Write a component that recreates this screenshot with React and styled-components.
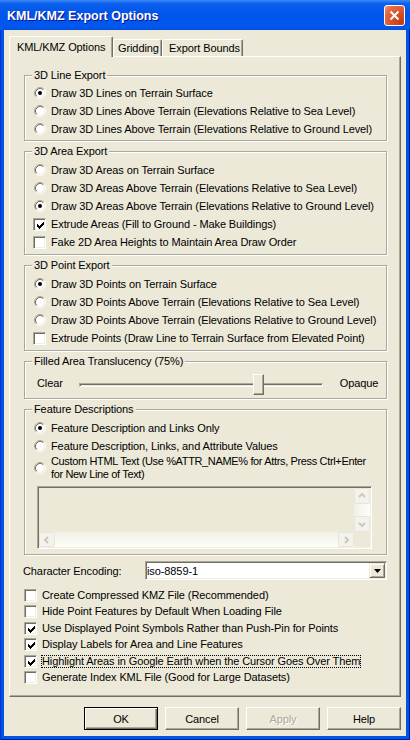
import styled, { createGlobalStyle } from "styled-components";

const GlobalStyle = createGlobalStyle`
  html, body { margin: 0; padding: 0; }
  body {
    font-family: "Liberation Sans", Arial, sans-serif;
    font-size: 11px;
    letter-spacing: -0.1px;
    color: #000;
    background: #0055e5;
  }
  * { box-sizing: border-box; }
`;

const Window = styled.div`
  width: 410px;
  height: 740px;
  display: flex;
  flex-direction: column;
  background: #0055e5;
  box-shadow: inset 1px 0 #0831d9, inset -1px 0 #001ea0, inset 0 -1px #001ea0;
`;

const TitleBar = styled.div`
  height: 30px;
  flex: none;
  display: flex;
  align-items: center;
  justify-content: space-between;
  padding: 1px 5px 0 7px;
  background: linear-gradient(180deg, #3d8af7 0%, #0a5fed 12%, #0055ea 50%, #0058ee 88%, #0050e0 100%);
`;

const Title = styled.span`
  color: #fff;
  font-weight: bold;
  font-size: 12.5px;
  letter-spacing: 0;
  text-shadow: 1px 1px #0f1089;
`;

const CloseButton = styled.div`
  width: 21px;
  height: 21px;
  border: 1px solid #fff;
  border-radius: 3px;
  background: radial-gradient(circle at 85% 85%, #c43b12 0%, #d8532a 45%, #e46a45 75%, #f09878 100%);
  display: flex;
  align-items: center;
  justify-content: center;
`;

const Client = styled.div`
  flex: 1;
  margin: 0 4px 4px;
  background: #ece9d8;
  display: flex;
  flex-direction: column;
  padding: 6px 5px 6px 5px;
`;

const TabStrip = styled.div`
  display: flex;
  align-items: flex-end;
  height: 20px;
  flex: none;
  position: relative;
  z-index: 1;
`;

const Tab = styled.div`
  width: ${(p) => p.$w}px;
  height: ${(p) => (p.$active ? 21 : 17)}px;
  margin-bottom: ${(p) => (p.$active ? -1 : 0)}px;
  padding-left: ${(p) => p.$pad}px;
  background: #ece9d8;
  border: 1px solid #fff;
  border-right-color: #716f64;
  border-bottom: none;
  border-top-left-radius: 2px;
  border-top-right-radius: 2px;
  box-shadow: inset -1px 0 #aca899;
  display: flex;
  align-items: center;
  white-space: nowrap;
`;

const Panel = styled.div`
  flex: 1;
  border: 1px solid;
  border-color: #fff #716f64 #716f64 #fff;
  box-shadow: inset -1px -1px #aca899;
  padding: 18px 13px 0 14px;
  display: flex;
  flex-direction: column;
`;

const Group = styled.div`
  border: 1px solid #aca899;
  box-shadow: 1px 1px #fff, inset 1px 1px #fff;
  padding: 0 0 ${(p) => p.$pb}px 8px;
  margin-bottom: ${(p) => (p.$last ? 0 : 10)}px;
`;

const Legend = styled.div`
  display: table;
  margin: -7px 0 0 -1px;
  padding: 0 2px;
  line-height: 13px;
  background: #ece9d8;
`;

const GroupBody = styled.div`
  padding-top: ${(p) => p.$pt}px;
  display: flex;
  flex-direction: column;
`;

const OptionRow = styled.div`
  display: flex;
  align-items: center;
  height: ${(p) => p.$h || 18}px;
  gap: 4px;
`;

const Label = styled.span`
  line-height: ${(p) => (p.$multi ? 13 : 11)}px;
  letter-spacing: ${(p) => (p.$multi ? "-0.35px" : "inherit")};
  border: 1px dotted ${(p) => (p.$focus ? "#000" : "transparent")};
  white-space: nowrap;
`;

const MarkBox = styled.span`
  width: 13px;
  height: 13px;
  flex: none;
  display: flex;
  align-items: center;
  padding-left: 1px;
`;

const CheckBox = styled.span`
  width: 13px;
  height: 13px;
  flex: none;
  background: #fff;
  border: 1px solid;
  border-color: #aca899 #fff #fff #aca899;
  box-shadow: inset 1px 1px #716f64, inset -1px -1px #f1efe2;
  padding: 2px 0 0 2px;
`;

const SliderRow = styled.div`
  display: flex;
  align-items: center;
  height: 24px;
  padding-left: 4px;
`;

const Track = styled.div`
  position: relative;
  width: 244px;
  height: 4px;
  margin: 4px 17px 0 16px;
  border: 1px solid;
  border-color: #aca899 #fff #fff #aca899;
  box-shadow: inset 1px 1px #716f64;
`;

const Thumb = styled.div`
  position: absolute;
  top: -10px;
  width: 11px;
  height: 21px;
  background: #ece9d8;
  border: 1px solid;
  border-color: #fff #716f64 #716f64 #fff;
  box-shadow: inset -1px -1px #aca899;
`;

const TextBox = styled.div`
  margin: 5px 0 0 4px;
  width: 335px;
  height: 63px;
  border: 1px solid;
  border-color: #aca899 #fff #fff #aca899;
  box-shadow: inset 1px 1px #716f64, inset -1px -1px #f1efe2;
  padding: 1px;
  display: grid;
  grid-template-columns: 1fr 16px;
  grid-template-rows: 1fr 15px;
  background: #ece9d8;
`;

const VScroll = styled.div`
  display: flex;
  flex-direction: column;
  background: linear-gradient(90deg, #f1efe6, #fefefb);
`;

const HScroll = styled.div`
  display: flex;
  background: linear-gradient(180deg, #f1efe6, #fefefb);
`;

const ScrollTrack = styled.div`
  flex: 1;
`;

const ScrollButton = styled.div`
  width: 16px;
  height: ${(p) => (p.$h ? 15 : 16)}px;
  flex: none;
  border: 1px solid #e8e6dc;
  border-radius: 2px;
  background: #f3f2ec;
  display: flex;
  align-items: center;
  justify-content: center;
`;

const FieldRow = styled.div`
  display: flex;
  align-items: center;
  justify-content: space-between;
  height: 19px;
  margin-top: 6px;
`;

const FieldLabel = styled.span`
  margin-left: -1px;
`;

const Select = styled.div`
  width: 242px;
  height: 19px;
  background: #fff;
  border: 1px solid;
  border-color: #aca899 #fff #fff #aca899;
  box-shadow: inset 1px 1px #716f64, inset -1px -1px #f1efe2;
  padding: 1px;
  display: flex;
  align-items: center;
`;

const SelectValue = styled.span`
  flex: 1;
`;

const DropButton = styled.div`
  width: 16px;
  height: 15px;
  background: #ece9d8;
  border: 1px solid;
  border-color: #ece9d8 #716f64 #716f64 #ece9d8;
  box-shadow: inset 1px 1px #fff, inset -1px -1px #aca899;
  display: flex;
  align-items: center;
  justify-content: center;
`;

const CheckList = styled.div`
  margin-top: 7px;
  display: flex;
  flex-direction: column;
`;

const ButtonRow = styled.div`
  display: flex;
  justify-content: flex-end;
  gap: 7px;
  margin-top: 10px;
  flex: none;
`;

const Button = styled.div`
  width: 74px;
  height: 23px;
  display: flex;
  align-items: center;
  justify-content: center;
  background: #ece9d8;
  border: 1px solid;
  border-color: ${(p) => (p.$default ? "#000" : "#fff #716f64 #716f64 #fff")};
  box-shadow: ${(p) =>
    p.$default
      ? "inset 1px 1px #fff, inset -1px -1px #716f64, inset -2px -2px #aca899"
      : "inset -1px -1px #aca899"};
  color: ${(p) => (p.$disabled ? "#aca899" : "#000")};
  text-shadow: ${(p) => (p.$disabled ? "1px 1px #fff" : "none")};
`;

const Radio = ({ on }) => (
  <MarkBox>
    <svg width="12" height="12" viewBox="0 0 12 12">
      <circle cx="6" cy="6" r="4.5" fill="#fff" />
      <path d="M2.11 9.89 A5.5 5.5 0 0 1 9.89 2.11" fill="none" stroke="#aca899" />
      <path d="M9.89 2.11 A5.5 5.5 0 0 1 2.11 9.89" fill="none" stroke="#fff" />
      <path d="M2.82 9.18 A4.5 4.5 0 0 1 9.18 2.82" fill="none" stroke="#716f64" />
      <path d="M9.18 2.82 A4.5 4.5 0 0 1 2.82 9.18" fill="none" stroke="#f1efe2" />
      {on && <circle cx="6" cy="6" r="2" fill="#000" />}
    </svg>
  </MarkBox>
);

const checkCols = [2, 3, 4, 3, 2, 1, 0];

const Check = ({ on }) => (
  <CheckBox>
    {on && (
      <svg width="7" height="7" viewBox="0 0 7 7" style={{ display: "block", marginLeft: 1, marginTop: 1 }}>
        {checkCols.map((y, x) => (
          <rect key={x} x={x} y={y} width="1" height="3" fill="#000" />
        ))}
      </svg>
    )}
  </CheckBox>
);

const Chevron = ({ dir }) => {
  const pts = {
    up: "3,7 6,4 9,7",
    down: "3,5 6,8 9,5",
    left: "7,3 4,6 7,9",
    right: "5,3 8,6 5,9",
  }[dir];
  return (
    <svg width="12" height="12" viewBox="0 0 12 12">
      <polyline points={pts} fill="none" stroke="#c9c7bb" strokeWidth="1.8" />
    </svg>
  );
};

const RadioOption = ({ on, children }) => (
  <OptionRow>
    <Radio on={on} />
    <Label>{children}</Label>
  </OptionRow>
);

const CheckOption = ({ on, h, focus, children }) => (
  <OptionRow $h={h}>
    <Check on={on} />
    <Label $focus={focus}>{children}</Label>
  </OptionRow>
);

const App = () => (
  <>
    <GlobalStyle />
    <Window>
      <TitleBar>
        <Title>KML/KMZ Export Options</Title>
        <CloseButton>
          <svg width="11" height="11" viewBox="0 0 11 11">
            <path d="M1.5 1.5 L9.5 9.5 M9.5 1.5 L1.5 9.5" stroke="#fff" strokeWidth="2" />
          </svg>
        </CloseButton>
      </TitleBar>
      <Client>
        <TabStrip>
          <Tab $active $w={104} $pad={7}>KML/KMZ Options</Tab>
          <Tab $w={49} $pad={4}>Gridding</Tab>
          <Tab $w={81} $pad={6}>Export Bounds</Tab>
        </TabStrip>
        <Panel>
          <Group $pb={2}>
            <Legend>3D Line Export</Legend>
            <GroupBody $pt={2}>
              <RadioOption on>Draw 3D Lines on Terrain Surface</RadioOption>
              <RadioOption>Draw 3D Lines Above Terrain (Elevations Relative to Sea Level)</RadioOption>
              <RadioOption>Draw 3D Lines Above Terrain (Elevations Relative to Ground Level)</RadioOption>
            </GroupBody>
          </Group>

          <Group $pb={3}>
            <Legend>3D Area Export</Legend>
            <GroupBody $pt={3}>
              <RadioOption>Draw 3D Areas on Terrain Surface</RadioOption>
              <RadioOption>Draw 3D Areas Above Terrain (Elevations Relative to Sea Level)</RadioOption>
              <RadioOption on>Draw 3D Areas Above Terrain (Elevations Relative to Ground Level)</RadioOption>
              <CheckOption on>Extrude Areas (Fill to Ground - Make Buildings)</CheckOption>
              <CheckOption>Fake 2D Area Heights to Maintain Area Draw Order</CheckOption>
            </GroupBody>
          </Group>

          <Group $pb={3}>
            <Legend>3D Point Export</Legend>
            <GroupBody $pt={3}>
              <RadioOption on>Draw 3D Points on Terrain Surface</RadioOption>
              <RadioOption>Draw 3D Points Above Terrain (Elevations Relative to Sea Level)</RadioOption>
              <RadioOption>Draw 3D Points Above Terrain (Elevations Relative to Ground Level)</RadioOption>
              <CheckOption>Extrude Points (Draw Line to Terrain Surface from Elevated Point)</CheckOption>
            </GroupBody>
          </Group>

          <Group $pb={3}>
            <Legend>Filled Area Translucency (75%)</Legend>
            <GroupBody $pt={3}>
              <SliderRow>
                <span>Clear</span>
                <Track>
                  <Thumb style={{ left: `${0.75 * (244 - 2 - 11)}px` }} />
                </Track>
                <span>Opaque</span>
              </SliderRow>
            </GroupBody>
          </Group>

          <Group $pb={5} $last>
            <Legend>Feature Descriptions</Legend>
            <GroupBody $pt={3}>
              <RadioOption on>Feature Description and Links Only</RadioOption>
              <RadioOption>Feature Description, Links, and Attribute Values</RadioOption>
              <OptionRow $h={26}>
                <Radio />
                <Label $multi>
                  Custom HTML Text (Use %ATTR_NAME% for Attrs, Press Ctrl+Enter
                  <br />
                  for New Line of Text)
                </Label>
              </OptionRow>
              <TextBox>
                <div />
                <VScroll>
                  <ScrollButton><Chevron dir="up" /></ScrollButton>
                  <ScrollTrack />
                  <ScrollButton><Chevron dir="down" /></ScrollButton>
                </VScroll>
                <HScroll>
                  <ScrollButton $h><Chevron dir="left" /></ScrollButton>
                  <ScrollTrack />
                  <ScrollButton $h><Chevron dir="right" /></ScrollButton>
                </HScroll>
                <div />
              </TextBox>
            </GroupBody>
          </Group>

          <FieldRow>
            <FieldLabel>Character Encoding:</FieldLabel>
            <Select>
              <SelectValue>iso-8859-1</SelectValue>
              <DropButton>
                <svg width="7" height="4" viewBox="0 0 7 4">
                  <path d="M0 0 H7 L3.5 4 Z" fill="#000" />
                </svg>
              </DropButton>
            </Select>
          </FieldRow>

          <CheckList>
            <CheckOption h={16.5}>Create Compressed KMZ File (Recommended)</CheckOption>
            <CheckOption h={16.5}>Hide Point Features by Default When Loading File</CheckOption>
            <CheckOption h={16.5} on>Use Displayed Point Symbols Rather than Push-Pin for Points</CheckOption>
            <CheckOption h={16.5} on>Display Labels for Area and Line Features</CheckOption>
            <CheckOption h={16.5} on focus>Highlight Areas in Google Earth when the Cursor Goes Over Them</CheckOption>
            <CheckOption h={16.5}>Generate Index KML File (Good for Large Datasets)</CheckOption>
          </CheckList>
        </Panel>
        <ButtonRow>
          <Button $default>OK</Button>
          <Button>Cancel</Button>
          <Button $disabled>Apply</Button>
          <Button>Help</Button>
        </ButtonRow>
      </Client>
    </Window>
  </>
);

export default App;
